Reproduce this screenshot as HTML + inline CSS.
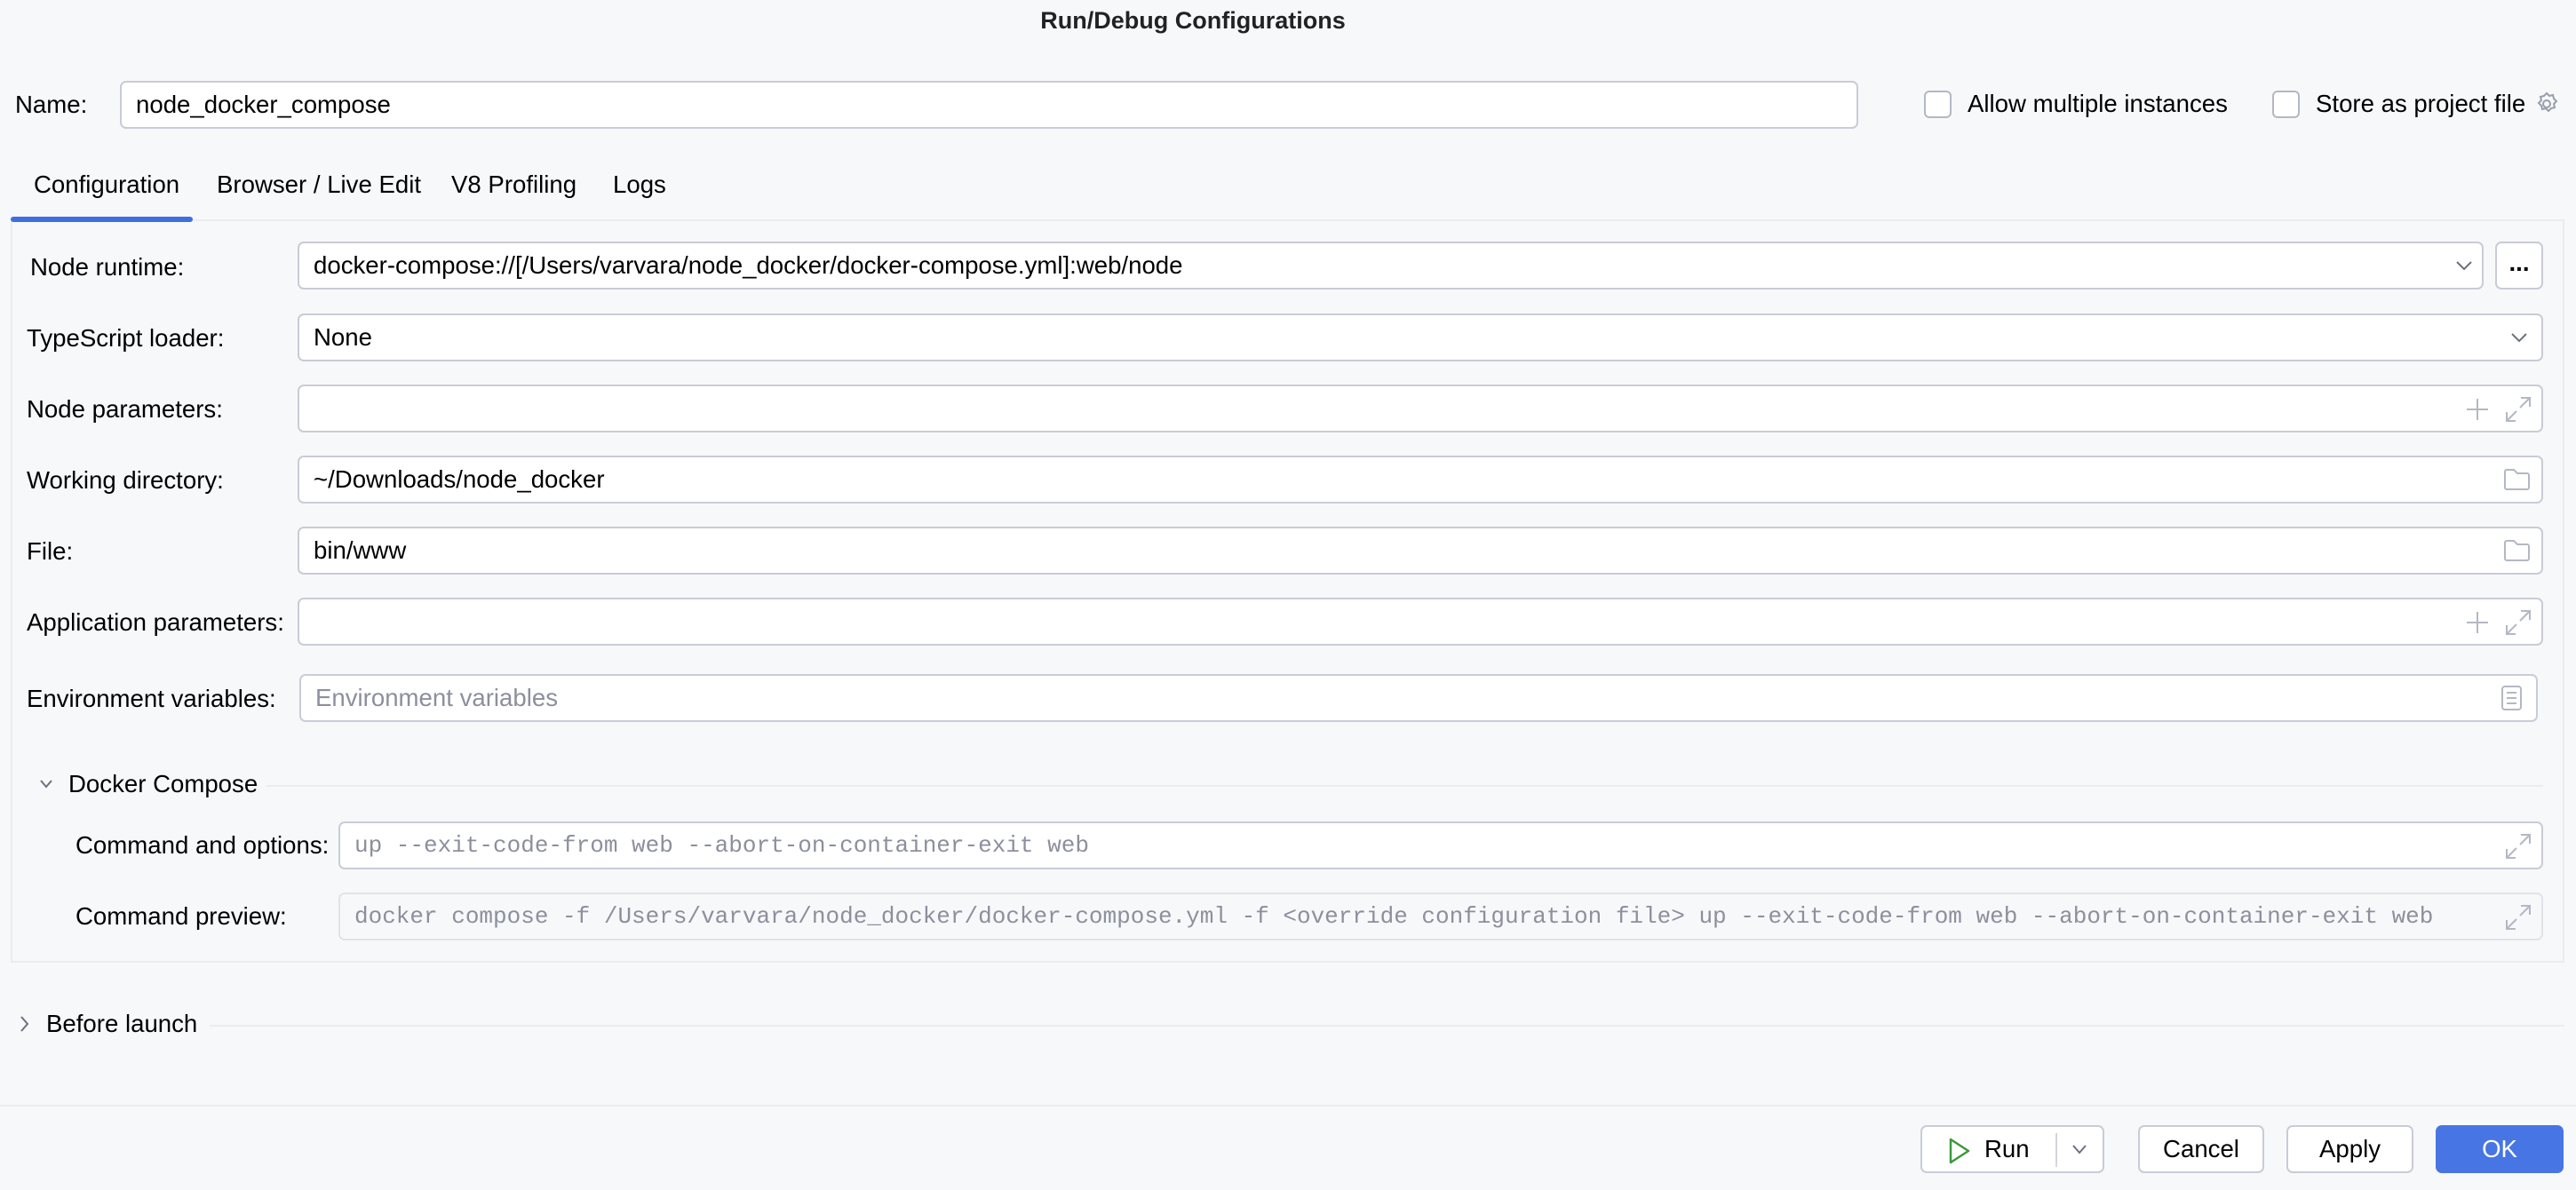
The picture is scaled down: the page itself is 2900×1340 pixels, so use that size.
<!DOCTYPE html>
<html><head><meta charset="utf-8"><style>
*{box-sizing:border-box;margin:0;padding:0}
body{width:2900px;height:1340px;background:#f7f8fa;font-family:"Liberation Sans",sans-serif;font-size:27.6px;color:#000;position:relative;overflow:hidden}
.a{position:absolute}
.lbl{position:absolute;line-height:30px;white-space:nowrap}
.in{position:absolute;background:#fff;border:2px solid #c9ccd6;border-radius:7px;height:54px;line-height:50px;padding-left:16px;white-space:nowrap;overflow:hidden}
.mono{font-family:"Liberation Mono",monospace;color:#8c8f9d;font-size:26px}
.cb{position:absolute;width:31px;height:31px;border:2px solid #b4b8c4;border-radius:6px;background:#fff}
.btn{position:absolute;top:1267px;height:54px;border:2px solid #c9ccd6;border-radius:7px;background:#fff;text-align:center;line-height:50px}
svg{position:absolute}
</style></head><body>
<div class="a" style="left:1043px;width:600px;top:8px;text-align:center;font-weight:bold;font-size:27px;color:#222">Run/Debug Configurations</div>

<div class="lbl" style="left:17px;top:103px">Name:</div>
<div class="in" style="left:135px;top:91px;width:1957px;padding-left:16px">node_docker_compose</div>
<div class="cb" style="left:2166px;top:102px"></div>
<div class="lbl" style="left:2215px;top:102px">Allow multiple instances</div>
<div class="cb" style="left:2558px;top:102px"></div>
<div class="lbl" style="left:2607px;top:102px">Store as project file</div>
<svg style="left:2853px;top:101px" width="30" height="32" viewBox="0 0 30 32" fill="none" stroke="#9a9eab" stroke-width="2"><circle cx="14" cy="16" r="4"/><path d="M14 4l3 3 4-1 1 4 3 3-3 3 1 4-4 1-3 3-3-3-4 1-1-4-3-3 3-3-1-4 4-1z"/></svg>

<div class="lbl" style="left:38px;top:193px">Configuration</div>
<div class="lbl" style="left:244px;top:193px">Browser / Live Edit</div>
<div class="lbl" style="left:508px;top:193px">V8 Profiling</div>
<div class="lbl" style="left:690px;top:193px">Logs</div>
<div class="a" style="left:12px;top:247px;width:2875px;height:837px;border:2px solid #ebecf0"></div>
<div class="a" style="left:12px;top:244px;width:205px;height:6px;background:#3d6fe0;border-radius:3px"></div>

<div class="lbl" style="left:34px;top:286px">Node runtime:</div>
<div class="in" style="left:335px;top:272px;width:2461px">docker-compose://[/Users/varvara/node_docker/docker-compose.yml]:web/node</div>
<svg style="left:2764px;top:292px" width="20" height="14" fill="none" stroke="#6c707e" stroke-width="2"><path d="M2 3l8 8 8-8"/></svg>
<div class="in" style="left:2809px;top:272px;width:54px;padding:0;text-align:center;line-height:44px;font-weight:bold">...</div>

<div class="lbl" style="left:30px;top:366px">TypeScript loader:</div>
<div class="in" style="left:335px;top:353px;width:2528px">None</div>
<svg style="left:2826px;top:373px" width="20" height="14" fill="none" stroke="#6c707e" stroke-width="2"><path d="M2 3l8 8 8-8"/></svg>

<div class="lbl" style="left:30px;top:446px">Node parameters:</div>
<div class="in" style="left:335px;top:433px;width:2528px"></div>

<div class="lbl" style="left:30px;top:526px">Working directory:</div>
<div class="in" style="left:335px;top:513px;width:2528px">~/Downloads/node_docker</div>

<div class="lbl" style="left:30px;top:606px">File:</div>
<div class="in" style="left:335px;top:593px;width:2528px">bin/www</div>

<div class="lbl" style="left:30px;top:686px">Application parameters:</div>
<div class="in" style="left:335px;top:673px;width:2528px"></div>

<div class="lbl" style="left:30px;top:772px">Environment variables:</div>
<div class="in" style="left:337px;top:759px;width:2520px;color:#8c8f9d">Environment variables</div>

<svg style="left:2776px;top:448px" width="26" height="26" fill="none" stroke="#b4b8c4" stroke-width="2"><path d="M13 1v24M1 13h24"/></svg>
<svg style="left:2820px;top:446px" width="30" height="30" fill="none" stroke="#b4b8c4" stroke-width="2"><path d="M18 2h10v10M28 2L17 13M12 28H2V18M2 28l11-11"/></svg>
<svg style="left:2776px;top:688px" width="26" height="26" fill="none" stroke="#b4b8c4" stroke-width="2"><path d="M13 1v24M1 13h24"/></svg>
<svg style="left:2820px;top:686px" width="30" height="30" fill="none" stroke="#b4b8c4" stroke-width="2"><path d="M18 2h10v10M28 2L17 13M12 28H2V18M2 28l11-11"/></svg>
<svg style="left:2819px;top:527px" width="30" height="26" fill="none" stroke="#b4b8c4" stroke-width="2"><path d="M3 2h8l4 4h11a2 2 0 0 1 2 2v14a2 2 0 0 1-2 2H3a2 2 0 0 1-2-2V4a2 2 0 0 1 2-2z"/></svg>
<svg style="left:2819px;top:607px" width="30" height="26" fill="none" stroke="#b4b8c4" stroke-width="2"><path d="M3 2h8l4 4h11a2 2 0 0 1 2 2v14a2 2 0 0 1-2 2H3a2 2 0 0 1-2-2V4a2 2 0 0 1 2-2z"/></svg>
<svg style="left:2815px;top:771px" width="26" height="30" fill="none" stroke="#b4b8c4" stroke-width="2"><rect x="2" y="2" width="21" height="26" rx="3"/><path d="M7 9h11M7 15h11M7 21h11"/></svg>

<svg style="left:44px;top:877px" width="16" height="12" fill="none" stroke="#6c707e" stroke-width="2"><path d="M2 2l6 7 6-7"/></svg>
<div class="lbl" style="left:77px;top:868px">Docker Compose</div>
<div class="a" style="left:300px;top:884px;width:2563px;height:2px;background:#ebecf0"></div>

<div class="lbl" style="left:85px;top:937px">Command and options:</div>
<div class="in mono" style="left:381px;top:925px;width:2482px">up --exit-code-from web --abort-on-container-exit web</div>
<svg style="left:2820px;top:938px" width="30" height="30" fill="none" stroke="#b4b8c4" stroke-width="2"><path d="M18 2h10v10M28 2L17 13M12 28H2V18M2 28l11-11"/></svg>

<div class="lbl" style="left:85px;top:1017px">Command preview:</div>
<div class="in mono" style="left:381px;top:1005px;width:2482px;background:#f7f8fa;border-color:#e1e3e8">docker compose -f /Users/varvara/node_docker/docker-compose.yml -f &lt;override configuration file&gt; up --exit-code-from web --abort-on-container-exit web</div>
<svg style="left:2820px;top:1018px" width="30" height="30" fill="none" stroke="#b4b8c4" stroke-width="2"><path d="M18 2h10v10M28 2L17 13M12 28H2V18M2 28l11-11"/></svg>

<svg style="left:22px;top:1143px" width="12" height="20" fill="none" stroke="#6c707e" stroke-width="2"><path d="M2 2l7 8-7 8"/></svg>
<div class="lbl" style="left:52px;top:1138px">Before launch</div>
<div class="a" style="left:236px;top:1154px;width:2651px;height:2px;background:#ebecf0"></div>

<div class="a" style="left:0;top:1244px;width:2900px;height:2px;background:#ebecf0"></div>

<div class="btn" style="left:2162px;width:207px"></div>
<svg style="left:2193px;top:1281px" width="26" height="30" fill="none" stroke="#3a9a3a" stroke-width="2.5"><path d="M3 2l20 13L3 28z" stroke-linejoin="round"/></svg>
<div class="lbl" style="left:2234px;top:1279px">Run</div>
<div class="a" style="left:2314px;top:1276px;width:2px;height:38px;background:#d3d5db"></div>
<svg style="left:2332px;top:1288px" width="18" height="12" fill="none" stroke="#6c707e" stroke-width="2"><path d="M2 2l7 8 7-8"/></svg>
<div class="btn" style="left:2407px;width:142px">Cancel</div>
<div class="btn" style="left:2574px;width:143px">Apply</div>
<div class="btn" style="left:2742px;width:144px;background:#4775e4;border-color:#4775e4;color:#fff">OK</div>
</body></html>
